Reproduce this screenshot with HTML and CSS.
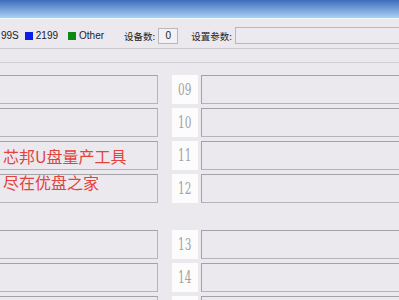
FILE: index.html
```html
<!DOCTYPE html>
<html lang="zh-CN">
<head>
    <meta charset="UTF-8">
    <meta name="viewport" content="width=device-width, initial-scale=1.0">
    <title>芯邦U盘量产工具</title>
    <link rel="stylesheet" href="styles.css">
</head>
<body>
    <div class="titlebar"></div>
    <div class="toolbar">
        <span class="legend first">99S</span>
        <span class="legend"><i class="swatch blue"></i>2199</span>
        <span class="legend"><i class="swatch green"></i>Other</span>
        <span class="field count-field">设备数: <span class="count">0</span></span>
        <span class="field param-field">设置参数: <span class="param"></span></span>
    </div>
    <div class="strip"></div>
    <main class="ports">
        <div class="group">
            <div class="row"><div class="slot"></div><div class="num"><span>09</span></div><div class="slot wide"></div></div>
            <div class="row"><div class="slot"></div><div class="num"><span>10</span></div><div class="slot wide"></div></div>
            <div class="row"><div class="slot"></div><div class="num"><span>11</span></div><div class="slot wide"></div></div>
            <div class="row"><div class="slot"></div><div class="num"><span>12</span></div><div class="slot wide"></div></div>
        </div>
        <div class="group">
            <div class="row"><div class="slot"></div><div class="num"><span>13</span></div><div class="slot wide"></div></div>
            <div class="row"><div class="slot"></div><div class="num"><span>14</span></div><div class="slot wide"></div></div>
            <div class="row"><div class="slot"></div><div class="num"><span>15</span></div><div class="slot wide"></div></div>
        </div>
        <!-- site watermark over the slots -->
        <div class="watermark">
            <div>芯邦U盘量产工具</div>
            <div>尽在优盘之家</div>
        </div>
    </main>
</body>
</html>
```

FILE: styles.css
```css
body {
    margin: 0;
    width: 399px;
    height: 300px;
    overflow: hidden;
    background-color: #ebe9ee;
    font-family: "Liberation Sans", "Noto Sans CJK SC", sans-serif;
    color: #222;
}

.titlebar {
    height: 18px;
    background: linear-gradient(to bottom, #3e6dba 0%, #6f9ad6 45%, #a9d3f3 100%);
    border-bottom: 1px solid #f4f6fa;
}

.toolbar {
    display: flex;
    align-items: center;
    height: 25px;
    padding-top: 4px;
    border-bottom: 1px solid #c9c8cd;
    font-size: 10px;
}

.legend {
    display: flex;
    align-items: center;
    gap: 3px;
}

.legend.first {
    margin-left: 1px;
    margin-right: 6px;
}

.legend + .legend {
    margin-right: 10px;
}

.swatch {
    display: inline-block;
    width: 8px;
    height: 8px;
}

.swatch.blue {
    background-color: #0a1ee6;
}

.swatch.green {
    background-color: #0b8a12;
}

.field {
    display: flex;
    align-items: center;
    gap: 3px;
    font-family: "Noto Sans CJK SC", sans-serif;
    font-size: 9.5px;
}

.count-field {
    margin-left: 10px;
}

.param-field {
    margin-left: 13px;
    flex: 1;
    margin-right: -20px;
}

.count {
    display: inline-block;
    width: 18px;
    height: 14px;
    line-height: 14px;
    text-align: center;
    border: 1px solid #b8b8bc;
    background-color: #f2f1f4;
    font-family: "Liberation Sans", sans-serif;
    font-size: 10px;
}

.param {
    flex: 1;
    height: 15px;
    border: 1px solid #b8b8bc;
    background-color: #eceaef;
}

.strip {
    height: 13px;
    border-bottom: 1px solid #cfced3;
}

.ports {
    position: relative;
    margin-left: -3px;
    margin-right: -20px;
    padding-top: 12px;
}

.group {
    display: flex;
    flex-direction: column;
    gap: 4px;
    margin-bottom: 27px;
}

.row {
    display: flex;
    height: 29px;
}

.slot {
    width: 159px;
    border: 1px solid #a3a2a6;
    border-bottom-color: #b5b4b8;
    border-right-color: #b5b4b8;
    background-color: #ebe9ee;
}

.slot.wide {
    width: auto;
    flex: 1;
    margin-left: 3px;
}

.num {
    width: 26px;
    margin-left: 14px;
    background-color: #fcfcfc;
    color: #a2a2a2;
    font-family: "DejaVu Serif", serif;
    font-size: 17px;
    line-height: 29px;
    text-align: center;
}

.num span {
    display: inline-block;
    transform: scaleX(0.62);
}

.watermark {
    position: absolute;
    left: 6px;
    top: 80px;
    color: #e3433d;
    font-family: "Noto Sans CJK SC", sans-serif;
    font-size: 16px;
    line-height: 26px;
}
```
